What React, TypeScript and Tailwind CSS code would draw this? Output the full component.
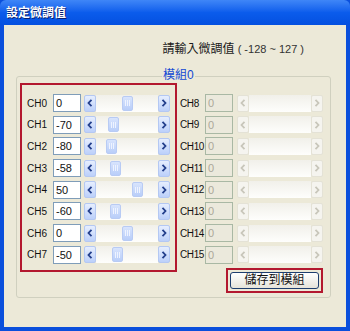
import React from "react";

type Channel = { name: string; value: number };

const left: Channel[] = [
  { name: "CH0", value: 0 },
  { name: "CH1", value: -70 },
  { name: "CH2", value: -80 },
  { name: "CH3", value: -58 },
  { name: "CH4", value: 50 },
  { name: "CH5", value: -60 },
  { name: "CH6", value: 0 },
  { name: "CH7", value: -50 },
];

const right = ["CH8", "CH9", "CH10", "CH11", "CH12", "CH13", "CH14", "CH15"];

const Arrow = ({ dir, disabled }: { dir: "l" | "r"; disabled?: boolean }) => (
  <div
    className={
      disabled
        ? "w-[12px] h-[17px] flex items-center justify-center rounded-[2px] border border-[#e4e2d6] bg-[#f5f4ef]"
        : "w-[12px] h-[17px] flex items-center justify-center rounded-[2px] border border-[#b4c8f3] bg-linear-to-b from-[#e6eefe] to-[#bcd0fa]"
    }
  >
    <svg width="6" height="8" viewBox="0 0 6 8">
      <path
        d={dir === "l" ? "M4.5 0.8 L1.5 4 L4.5 7.2" : "M1.5 0.8 L4.5 4 L1.5 7.2"}
        fill="none"
        stroke={disabled ? "#c8c6ba" : "#233f8c"}
        strokeWidth="1.8"
      />
    </svg>
  </div>
);

const ScrollBar = ({ value, disabled }: { value?: number; disabled?: boolean }) => {
  const pos = value === undefined ? 0 : ((value + 128) / 255) * 100;
  return (
    <div className="flex h-[17px] w-[86px]">
      <Arrow dir="l" disabled={disabled} />
      <div className="flex-1 relative bg-linear-to-b from-[#f1f0ea] to-[#fefefc]">
        {!disabled && (
          <div className="absolute top-[1px] bottom-[1px] left-0 right-[11px]">
            <div
              className="absolute top-0 w-[11px] h-[15px] flex items-center justify-center gap-[1px] rounded-[2px] border border-[#b8cbf4] bg-linear-to-b from-[#d8e4fd] to-[#b9cef9]"
              style={{ left: `${pos}%` }}
            >
              <span className="w-[1px] h-[6px] bg-[#eef3ff]" />
              <span className="w-[1px] h-[6px] bg-[#eef3ff]" />
              <span className="w-[1px] h-[6px] bg-[#eef3ff]" />
            </div>
          </div>
        )}
      </div>
      <Arrow dir="r" disabled={disabled} />
    </div>
  );
};

export default function App() {
  return (
    <div
      className="w-[350px] h-[331px] flex flex-col bg-[#0a4fdc] overflow-hidden"
      style={{ fontFamily: '"Liberation Sans", "Noto Sans CJK TC", sans-serif' }}
    >
      <div className="h-[25px] flex items-center pl-[6px] rounded-t-[6px] bg-linear-to-b from-[#3f86f7] via-[#0b5cec] to-[#0450e0]">
        <span className="text-[12px] font-bold text-white [text-shadow:1px_1px_0_#0a1f6e]">設定微調值</span>
      </div>
      <div className="flex-1 mx-[4px] mb-[4px] bg-[#ece9d8] flex flex-col">
        <div className="flex justify-end pr-[42px] mt-[15px] text-[12px] text-[#1a1a1a] leading-[18px]">
          <span>
            請輸入微調值<span className="text-[11px] text-[#333]"> ( -128 ~ 127 )</span>
          </span>
        </div>
        <div className="relative ml-[12px] mr-[15px] mt-[18px] h-[222px] border border-[#d0d0bf] rounded-[3px]">
          <span className="absolute left-[145px] top-[-10px] px-[1px] bg-[#ece9d8] text-[12px] leading-[16px] text-[#1148d4]">
            模組0
          </span>
          <div className="flex">
            <div className="ml-[3px] mt-[6px] w-[157px] h-[189px] border-2 border-[#b3182f] pt-[9px] pl-[5px] flex flex-col gap-[3.7px]">
              {left.map((c) => (
                <div key={c.name} className="flex items-center h-[18px]">
                  <span className="w-[26px] text-[10px] text-[#111]">{c.name}</span>
                  <div className="w-[28px] h-[18px] border border-[#7f9db9] bg-white text-[11px] leading-[16px] pl-[2px] text-[#111]">
                    {c.value}
                  </div>
                  <div className="ml-[3px]">
                    <ScrollBar value={c.value} />
                  </div>
                </div>
              ))}
            </div>
            <div className="ml-[3px] flex flex-col">
              <div className="mt-[17px] flex flex-col gap-[3.7px]">
                {right.map((n) => (
                  <div key={n} className="flex items-center h-[18px]">
                    <span className="w-[25px] text-[10px] tracking-[-0.4px] text-[#111] whitespace-nowrap">{n}</span>
                    <div className="w-[28px] h-[18px] border border-[#a9b8a4] bg-[#ebe9dc] text-[11px] leading-[16px] pl-[2px] text-[#aca899]">
                      0
                    </div>
                    <div className="ml-[4px]">
                      <ScrollBar disabled />
                    </div>
                  </div>
                ))}
              </div>
              <div className="mt-[4px] ml-[46px] w-[97px] h-[25px] border-2 border-[#b3182f] flex items-center justify-center">
                <div className="w-[89px] h-[17px] rounded-[3px] border border-[#1e3e6e] bg-linear-to-b from-[#ffffff] to-[#e6e4da] flex items-center justify-center text-[12px] text-[#111]">
                  儲存到模組
                </div>
              </div>
            </div>
          </div>
        </div>
      </div>
    </div>
  );
}
